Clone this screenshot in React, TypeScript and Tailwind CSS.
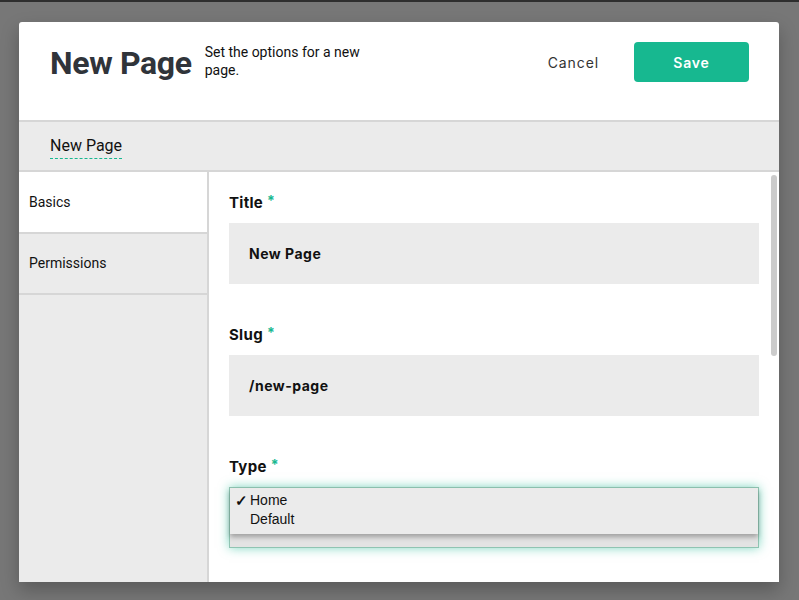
import React from 'react';

const fields = [
    { label: 'Title', value: 'New Page' },
    { label: 'Slug', value: '/new-page' },
];

const Label = ({ text }: { text: string }) => (
    <div className="h-[20px] flex items-start gap-[4px] text-[15px] leading-[20px] font-bold tracking-[0.3px] text-[#111] font-['Inter',sans-serif]">
        {text}
        <span className="text-[#17b890] text-[14px] leading-[16px]">*</span>
    </div>
);

export default function App() {
    return (
        <div className="w-[799px] h-[600px] bg-[#777777] border-t-2 border-[#2e2e2e] pt-[20px] pl-[19px] overflow-hidden font-['Roboto',sans-serif]">
            <div className="w-[760px] h-[560px] bg-white rounded-t-[3px] shadow-[0_8px_18px_rgba(0,0,0,0.25)] flex flex-col">
                {/* header */}
                <div className="h-[100px] shrink-0 flex items-start pl-[31px] pr-[30px] pt-[20px] border-b-2 border-[#d6d6d6]">
                    <h1 className="text-[32px] leading-[40px] font-bold tracking-[-0.35px] text-[#30343a] mt-[1px]">New Page</h1>
                    <p className="ml-[13px] mt-[1px] w-[175px] text-[14px] leading-[18px] text-[#111]">Set the options for a new page.</p>
                    <div className="ml-auto flex items-center">
                        <button className="text-[14px] tracking-[0.9px] text-[#333] font-['Inter',sans-serif] mr-[35px]">Cancel</button>
                        <button className="w-[115px] h-[40px] rounded-[4px] bg-[#17b890] text-white text-[14px] font-semibold tracking-[0.8px] font-['Inter',sans-serif]">Save</button>
                    </div>
                </div>

                {/* breadcrumb */}
                <div className="h-[50px] shrink-0 bg-[#ebebeb] border-b-2 border-[#d6d6d6] pl-[31px] flex items-center">
                    <span className="text-[16px] leading-[20px] text-[#111] border-b border-dashed border-[#17b890] pb-[2px] mt-[2px]">New Page</span>
                </div>

                {/* body */}
                <div className="flex flex-1 min-h-0">
                    <div className="w-[190px] shrink-0 bg-[#ebebeb] border-r-2 border-[#d6d6d6] flex flex-col">
                        <div className="h-[62px] bg-white border-b-2 border-[#d6d6d6] pl-[10px] flex items-center text-[14px] text-[#111]">Basics</div>
                        <div className="h-[61px] border-b-2 border-[#d6d6d6] pl-[10px] flex items-center text-[14px] text-[#111]">Permissions</div>
                    </div>

                    <div className="relative flex-1 overflow-hidden pl-[20px] pr-[20px] pt-[21px]">
                        {fields.map((f) => (
                            <div key={f.label} className="mb-[41px]">
                                <Label text={f.label} />
                                <div className="mt-[10px] h-[61px] bg-[#ebebeb] pl-[20px] flex items-center text-[14px] font-bold tracking-[0.5px] text-[#111] font-['Inter',sans-serif]">
                                    {f.value}
                                </div>
                            </div>
                        ))}
                        <Label text="Type" />
                        <div className="mt-[10px] h-[61px] bg-[#e3e3e3] border border-[#8fc4b2] shadow-[0_0_10px_rgba(23,184,144,0.55)] flex flex-col">
                            <div className="h-[46px] bg-[#ebebeb] shadow-[0_3px_5px_rgba(0,0,0,0.3)] pt-[3px] text-[14px] leading-[19px] text-[#111] font-['Liberation_Sans',sans-serif]">
                                <div className="flex"><span className="w-[20px] pl-[5px] text-[15px] font-bold">✓</span>Home</div>
                                <div className="pl-[20px]">Default</div>
                            </div>
                        </div>

                        {/* scrollbar */}
                        <div className="absolute top-[3px] right-[2px] w-[6px] h-[181px] rounded-full bg-[#cbcbcb]" />
                    </div>
                </div>
            </div>
        </div>
    );
}
